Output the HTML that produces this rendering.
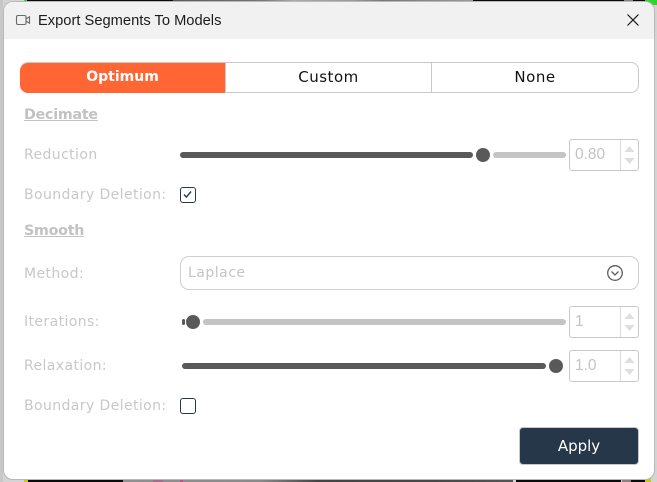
<!DOCTYPE html>
<html><head><meta charset="utf-8"><style>
html,body{margin:0;padding:0;width:657px;height:482px;overflow:hidden;background:#d4d4d4}
body{position:relative;font-family:"DejaVu Sans","Liberation Sans",sans-serif}
.a{position:absolute}
.strip{position:absolute;height:3px}
#dlg{position:absolute;left:3px;top:1px;width:650px;height:477px;background:#fff;border:1px solid #b9b9b9;border-radius:10px;overflow:hidden}
#head{position:absolute;left:0;top:0;width:100%;height:37px;background:#f1f1f1}
.lbl{position:absolute;left:24px;font-size:14px;line-height:20px;letter-spacing:.4px;color:#c8c8c8;white-space:nowrap}
.h{position:absolute;left:24px;font-size:14.2px;line-height:20px;font-weight:bold;color:#c2c2c2;text-decoration:underline;white-space:nowrap;letter-spacing:-.2px}
.seg{position:absolute;top:63px;height:30px;line-height:28px;text-align:center;font-size:15px;letter-spacing:.5px;color:#111;box-sizing:border-box}
.track{position:absolute;height:6px;border-radius:3px}
.thumb{position:absolute;width:14px;height:14px;border-radius:50%;background:#595959}
.spin{position:absolute;left:569px;width:70px;height:32px;box-sizing:border-box;border:1px solid #c8c8c8;border-radius:3px;background:#fff}
.spin span{position:absolute;left:5px;top:6px;font:15.5px/18px "Liberation Sans",sans-serif;color:#c4c4c4}
.spin i{position:absolute;left:50px;top:0;width:1px;height:30px;background:#dcdcdc}
.spin svg{position:absolute;left:51px;top:0}
.cb{position:absolute;left:180px;width:16px;height:16px;box-sizing:border-box;border:1.5px solid #26394a;border-radius:3px;background:#fff}
</style></head><body>
<div class="strip" style="left:24px;top:0;width:3px;background:#2fd42f"></div>
<div class="strip" style="left:27px;top:0;width:146px;background:#0a0a0a"></div>
<div class="strip" style="left:173px;top:0;width:300px;background:linear-gradient(90deg,#5a5a5a,#777 30%,#aaa 40%,#999 60%,#777 70%,#999)"></div>
<div class="strip" style="left:473px;top:0;width:155px;background:#0a0a0a"></div>
<div class="strip" style="left:624px;top:0;width:9px;background:#8d7f7f"></div>
<div class="strip" style="left:633px;top:0;width:12px;background:#0a0a0a"></div>
<div class="strip" style="left:645px;top:0;width:12px;height:5px;background:#2fd42f"></div>
<div class="strip" style="left:0;top:0;width:3px;height:482px;background:#c8c8c8"></div>
<div class="strip" style="left:24px;top:479px;width:4px;background:#c9c911"></div>
<div class="strip" style="left:28px;top:479px;width:95px;background:#0a0a0a"></div>
<div class="strip" style="left:123px;top:479px;width:390px;background:linear-gradient(90deg,#909090,#8a8a8a 35%,#444 50%,#484848 80%,#555)"></div>
<div class="strip" style="left:153px;top:479px;width:10px;background:#a0708a"></div>
<div class="strip" style="left:180px;top:479px;width:3px;background:#c0508a"></div>
<div class="strip" style="left:516px;top:479px;width:105px;background:#0a0a0a"></div>
<div class="strip" style="left:622px;top:479px;width:9px;background:#8d7f7f"></div>
<div class="strip" style="left:631px;top:479px;width:14px;background:#0a0a0a"></div>
<div class="strip" style="left:645px;top:470px;width:6px;height:12px;background:#c9c911"></div>

<div id="dlg"><div id="head"></div></div>

<svg class="a" style="left:15px;top:13px" width="17" height="14" viewBox="0 0 17 14" fill="none" stroke="#6a6a6a" stroke-width="1.1"><rect x="1.5" y="2.5" width="9.5" height="9" rx="1.5"/><path d="M11 6l3.5-2.2v6.4L11 8"/></svg>
<div class="a" style="left:38px;top:11px;font:14.7px/20px 'Liberation Sans',sans-serif;color:#1c1c1c;white-space:nowrap">Export Segments To Models</div>
<svg class="a" style="left:626px;top:13px" width="14" height="14" viewBox="0 0 14 14" stroke="#1a1a1a" stroke-width="1.2" fill="none"><path d="M1.5 1.5l11 11M12.5 1.5l-11 11"/></svg>

<div class="a" style="left:20px;top:62px;width:619px;height:31px;box-sizing:border-box;border:1px solid #c8c8c8;border-radius:8px;background:#fff"></div>
<div class="seg" style="left:20px;width:205px;background:#ff6633;color:#fff;font-weight:bold;border-radius:8px 0 0 8px;font-size:14px;letter-spacing:0;line-height:29px">Optimum</div>
<div class="seg" style="left:226px;width:205px">Custom</div>
<div class="seg" style="left:432px;width:206px">None</div>
<div class="a" style="left:225px;top:62px;width:1px;height:31px;background:#c8c8c8"></div>
<div class="a" style="left:431px;top:62px;width:1px;height:31px;background:#c8c8c8"></div>

<div class="h" style="top:105px">Decimate</div>
<div class="lbl" style="top:145px">Reduction</div>
<div class="track" style="left:180px;top:152px;width:293px;background:#595959"></div>
<div class="track" style="left:493px;top:152px;width:73px;background:#c4c4c4"></div>
<div class="thumb" style="left:476px;top:148px"></div>
<div class="spin" style="top:139px"><span>0.80</span><i></i><svg width="17" height="30" fill="#dedede"><path d="M8.5 6l5 6h-10zM8.5 24l5-6h-10z"/></svg></div>

<div class="lbl" style="top:185px">Boundary Deletion:</div>
<div class="cb" style="top:187px"><svg class="a" style="left:1px;top:1px" width="11" height="11" viewBox="0 0 11 11" fill="none" stroke="#26394a" stroke-width="1.4"><path d="M2 5.5l2.4 2.6L9 2.5"/></svg></div>

<div class="h" style="top:221px">Smooth</div>
<div class="lbl" style="top:264px">Method:</div>
<div class="a" style="left:180px;top:256px;width:459px;height:34px;box-sizing:border-box;border:1px solid #cfcfcf;border-radius:9px;background:#fff"></div>
<div class="a" style="left:188px;top:264px;font-size:14px;letter-spacing:.5px;line-height:18px;color:#c4c4c4">Laplace</div>
<svg class="a" style="left:606px;top:264px" width="18" height="18" viewBox="0 0 18 18" fill="none" stroke="#5c5c5c" stroke-width="1.3"><circle cx="9" cy="9" r="7.3"/><path d="M5.5 7.5L9 11l3.5-3.5"/></svg>

<div class="lbl" style="top:312px">Iterations:</div>
<div class="track" style="left:182px;top:319px;width:3px;background:#595959"></div>
<div class="track" style="left:203px;top:319px;width:363px;background:#c4c4c4"></div>
<div class="thumb" style="left:186px;top:315px"></div>
<div class="spin" style="top:306px"><span>1</span><i></i><svg width="17" height="30" fill="#dedede"><path d="M8.5 6l5 6h-10zM8.5 24l5-6h-10z"/></svg></div>

<div class="lbl" style="top:356px">Relaxation:</div>
<div class="track" style="left:182px;top:363px;width:364px;background:#595959"></div>
<div class="thumb" style="left:549px;top:359px"></div>
<div class="spin" style="top:350px"><span>1.0</span><i></i><svg width="17" height="30" fill="#dedede"><path d="M8.5 6l5 6h-10zM8.5 24l5-6h-10z"/></svg></div>

<div class="lbl" style="top:396px">Boundary Deletion:</div>
<div class="cb" style="top:398px"></div>

<div class="a" style="left:519px;top:427px;width:120px;height:38px;box-sizing:border-box;border:1px solid #c4c8cc;border-radius:4px;background:#253748;color:#fff;text-align:center;font-size:15px;line-height:36px">Apply</div>
</body></html>
